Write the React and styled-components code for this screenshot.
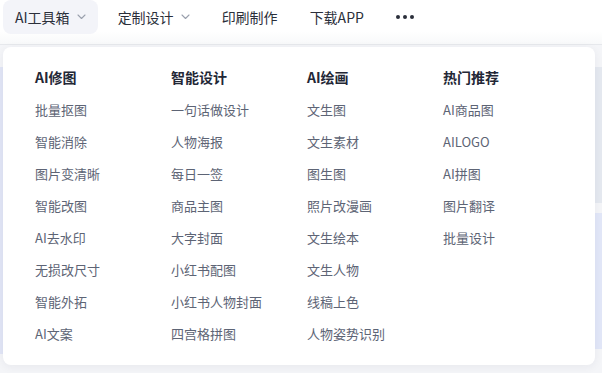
import React from 'react'
import styled, {createGlobalStyle} from 'styled-components'

const GlobalStyle = createGlobalStyle`
  html, body {
    margin: 0;
    padding: 0;
    background: #f4f5f8;
    font-family: "Noto Sans CJK SC", "Noto Sans", sans-serif;
    overflow: hidden;
  }
`

const Page = styled.div`
  position: relative;
  width: 602px;
  height: 373px;
  overflow: hidden;
  background: #f4f5f8;
`

const NavBar = styled.nav`
  height: 45px;
  display: flex;
  align-items: flex-start;
  gap: 8px;
  padding-left: 3px;
  background: linear-gradient(#ffffff 70%, #f8f9fa);
  border-bottom: 1px solid #e6e8ec;
  box-sizing: border-box;
`

const NavItem = styled.div`
  height: 34px;
  display: flex;
  align-items: center;
  gap: 7px;
  padding: 0 12px;
  border-radius: 8px;
  font-size: 14px;
  color: #2b2f3a;
  background: ${({$active}) => ($active ? '#f3f4f9' : 'transparent')};
  white-space: nowrap;
`

const Dots = styled.div`
  display: flex;
  gap: 3px;
  span {
    width: 4px;
    height: 4px;
    border-radius: 50%;
    background: #2b2f3a;
  }
`

const Backdrop = styled.div`
  display: flex;
  justify-content: space-between;
  padding-top: 22px;
`

const SideCard = styled.div`
  width: 8px;
  display: flex;
  flex-direction: column;
  gap: 10px;
`

const Block = styled.div`
  height: ${({$h}) => $h}px;
  background: ${({$c}) => $c};
`

const Dropdown = styled.div`
  position: absolute;
  left: 3px;
  top: 47px;
  width: 592px;
  height: 318px;
  box-sizing: border-box;
  padding: 20px 0 0 32px;
  background: #ffffff;
  border-radius: 8px;
  box-shadow: 0 2px 10px rgba(30, 40, 70, 0.06);
  display: grid;
  grid-template-columns: repeat(4, 136px);
  align-items: start;
`

const Column = styled.div`
  display: flex;
  flex-direction: column;
`

const Heading = styled.div`
  font-size: 14px;
  font-weight: 700;
  line-height: 20px;
  color: #232736;
  margin-bottom: 7px;
`

const Item = styled.div`
  font-size: 13px;
  line-height: 32px;
  height: 32px;
  color: #5d6475;
  white-space: nowrap;
`

const Chevron = () => (
  <svg width="9" height="6" viewBox="0 0 9 6" fill="none">
    <path d="M1 1l3.5 3.5L8 1" stroke="#9aa0ad" strokeWidth="1.1" strokeLinecap="round" strokeLinejoin="round" />
  </svg>
)

const columns = [
  {
    title: 'AI修图',
    items: ['批量抠图', '智能消除', '图片变清晰', '智能改图', 'AI去水印', '无损改尺寸', '智能外拓', 'AI文案'],
  },
  {
    title: '智能设计',
    items: ['一句话做设计', '人物海报', '每日一签', '商品主图', '大字封面', '小红书配图', '小红书人物封面', '四宫格拼图'],
  },
  {
    title: 'AI绘画',
    items: ['文生图', '文生素材', '图生图', '照片改漫画', '文生绘本', '文生人物', '线稿上色', '人物姿势识别'],
  },
  {
    title: '热门推荐',
    items: ['AI商品图', 'AILOGO', 'AI拼图', '图片翻译', '批量设计'],
  },
]

const App = () => (
  <Page>
    <GlobalStyle />
    <NavBar>
      <NavItem $active>
        AI工具箱
        <Chevron />
      </NavItem>
      <NavItem>
        定制设计
        <Chevron />
      </NavItem>
      <NavItem>印刷制作</NavItem>
      <NavItem>下载APP</NavItem>
      <NavItem>
        <Dots>
          <span />
          <span />
          <span />
        </Dots>
      </NavItem>
    </NavBar>

    <Backdrop>
      <SideCard>
        <Block $h={287} $c="#e2e6f6" />
      </SideCard>
      <SideCard>
        <Block $h={136} $c="#e5e9f0" />
        <Block $h={136} $c="#e2e7f8" />
      </SideCard>
    </Backdrop>

    <Dropdown>
      {columns.map((col) => (
        <Column key={col.title}>
          <Heading>{col.title}</Heading>
          {col.items.map((it) => (
            <Item key={it}>{it}</Item>
          ))}
        </Column>
      ))}
    </Dropdown>
  </Page>
)

export default App
